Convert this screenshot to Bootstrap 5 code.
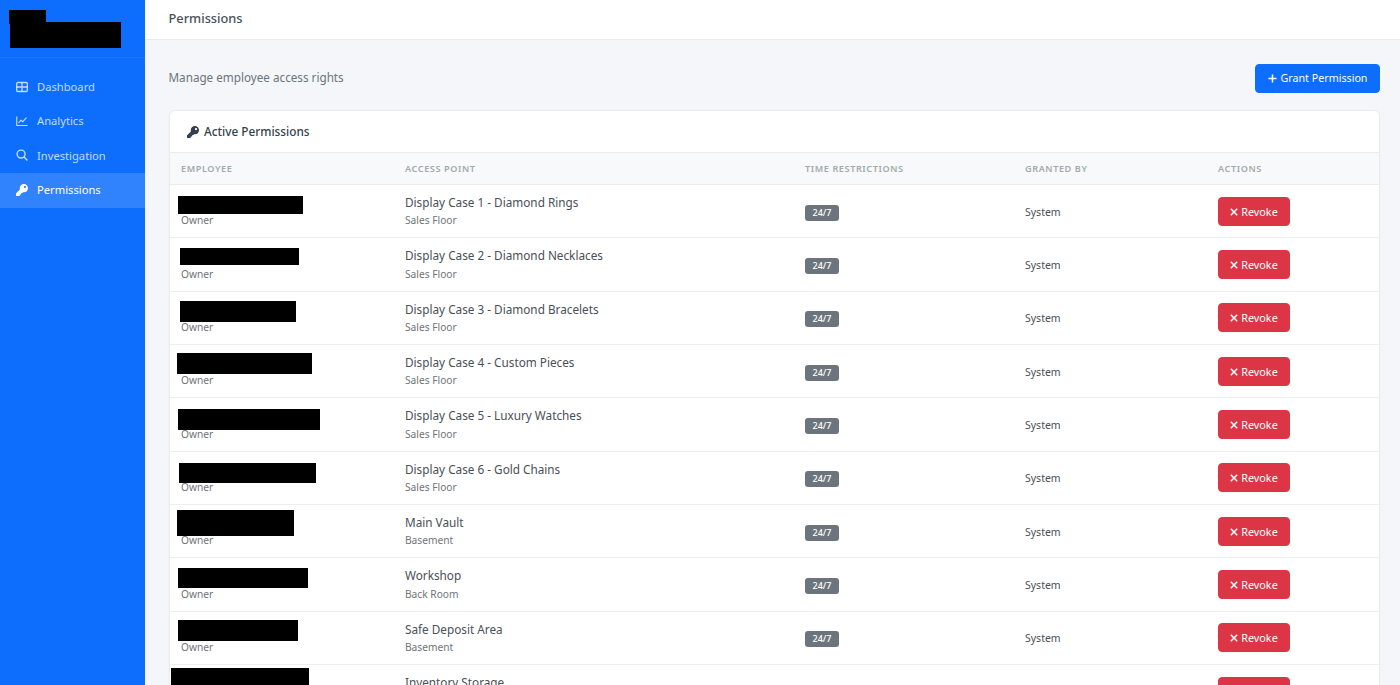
<!DOCTYPE html>
<html lang="en">
  <head>
    <meta charset="UTF-8" />
    <meta name="viewport" content="width=device-width, initial-scale=1.0" />
    <title>Permissions</title>
    <link href="https://cdn.jsdelivr.net/npm/bootstrap@5.3.0/dist/css/bootstrap.min.css" rel="stylesheet" />
    <style>
      html, body { height: 100%; overflow: hidden; }
      body { font-family: "Noto Sans", sans-serif; background: #f4f6f9; color: #495057; font-size: 11.2px; }
      .side-bar { width: 145px; background: #0d6efd; flex: none; }
      .side-logo { height: 58px; border-bottom: 1px solid rgba(255,255,255,.06); position: relative; }
      .side-links { padding-top: 12px; }
      .side-link { display: flex; align-items: center; height: 34.4px; padding-left: 16px; gap: 9px; color: rgba(255,255,255,.75); font-size: 11.2px; text-decoration: none; }
      .side-link svg { width: 12px; height: 12px; flex: none; margin-top: -1px; }
      .side-link.on { background: rgba(255,255,255,.15); color: #fff; }
      .top-bar { height: 40px; background: #fff; border-bottom: 1px solid #e9ecef; padding: 0 0 2px 23.5px; font-size: 12.8px; font-weight: 500; color: #495057; }
      .main-area { padding: 24px 20px 0 24px; }
      .page-note { font-size: 11.7px; color: #6c757d; margin: 0 0 2px -.5px; }
      .grant-btn { font-size: 10.7px; height: 29px; width: 125px; padding: 0; border-radius: 4px; }
      .perm-card { border: 1px solid #e9ecef; border-radius: 6px; background: #fff; margin-top: 17px; box-shadow: 0 1px 2px rgba(0,0,0,.03); }
      .perm-head { height: 41px; padding-left: 17px; font-size: 11.8px; font-weight: 500; color: #343f4c; gap: 5px; }
      .perm-table { table-layout: fixed; width: 100%; margin: 0; }
      .perm-table th { background: #f8f9fa; color: #a0abab; font-size: 9.1px; font-weight: 600; letter-spacing: .6px; text-transform: uppercase; height: 32px; padding: 0 11px; border-top: 1px solid #e9ecef; border-bottom: 1px solid #e9ecef; vertical-align: middle; }
      .perm-table td { height: 53.33px; padding: 0 11px; border-bottom: 1px solid #eceff1; vertical-align: middle; color: #495057; font-size: 10.5px; position: relative; }
      .perm-table td.low-cell { padding-top: 3px; }
      .name-line { font-size: 11.76px; line-height: 17px; height: 17px; }
      .sub-line { font-size: 10.2px; line-height: 15px; color: #6f7478; margin-top: 2.5px; }
      .time-tag { background: #6c757d; color: #fff; font-size: 9px; font-weight: 500; border-radius: 3px; display: block; width: 34px; height: 16px; line-height: 16px; text-align: center; }
      .revoke-btn { font-size: 10.8px; width: 72px; height: 29px; padding: 1px 0 0; border-radius: 4px; gap: 3px; }
      .black-box { position: absolute; background: #000; }
    </style>
  </head>
  <body>
    <div class="d-flex h-100">
      <div class="side-bar">
        <div class="side-logo">
          <div class="black-box" style="left:9px;top:10px;width:37px;height:14px"></div>
          <div class="black-box" style="left:10px;top:22px;width:111px;height:26px"></div>
        </div>
        <nav class="side-links">
          <a class="side-link" href="#">
            <svg viewBox="0 0 16 16" fill="none" stroke="currentColor" stroke-width="1.7"><rect x=".9" y="2" width="14.2" height="12" rx="1.5"/><path d="M.8 8h14.4M8 2v12"/></svg>Dashboard</a>
          <a class="side-link" href="#">
            <svg viewBox="0 0 16 16" fill="none" stroke="currentColor" stroke-width="1.5"><path d="M1 2v12h14.5"/><path d="M3.5 10.5 6.5 7l2.5 2 5-5.5"/></svg>Analytics</a>
          <a class="side-link" href="#">
            <svg viewBox="0 0 16 16" fill="none" stroke="currentColor" stroke-width="1.9"><circle cx="6.8" cy="6.8" r="5.3"/><path d="m10.8 10.8 4.4 4.4"/></svg>Investigation</a>
          <a class="side-link on" href="#">
            <svg viewBox="0 0 512 512" fill="currentColor"><path d="M512 176.001C512 273.203 433.202 352 336 352c-11.22 0-22.19-1.062-32.827-3.069l-24.012 27.014A23.999 23.999 0 0 1 261.223 384H224v40c0 13.255-10.745 24-24 24h-40v40c0 13.255-10.745 24-24 24H24c-13.255 0-24-10.745-24-24v-78.059c0-6.365 2.529-12.47 7.029-16.971l161.802-161.802C163.108 213.814 160 195.271 160 176 160 78.798 238.797.001 335.999 0 433.488-.001 512 78.511 512 176.001zM336 128c0 26.51 21.49 48 48 48s48-21.49 48-48-21.49-48-48-48-48 21.49-48 48z"/></svg>Permissions</a>
        </nav>
      </div>
      <div class="flex-grow-1 overflow-hidden">
        <div class="top-bar d-flex align-items-center">Permissions</div>
        <div class="main-area">
          <div class="d-flex justify-content-between align-items-center">
            <span class="page-note">Manage employee access rights</span>
            <button class="btn btn-primary grant-btn d-flex align-items-center justify-content-center gap-1" type="button">
              <svg width="9" height="9" viewBox="0 0 10 10" fill="none" stroke="currentColor" stroke-width="1.7"><path d="M5 .5v9M.5 5h9"/></svg>Grant Permission</button>
          </div>
          <div class="perm-card">
            <div class="perm-head d-flex align-items-center">
              <svg width="12" height="12" viewBox="0 0 512 512" fill="currentColor"><path d="M512 176.001C512 273.203 433.202 352 336 352c-11.22 0-22.19-1.062-32.827-3.069l-24.012 27.014A23.999 23.999 0 0 1 261.223 384H224v40c0 13.255-10.745 24-24 24h-40v40c0 13.255-10.745 24-24 24H24c-13.255 0-24-10.745-24-24v-78.059c0-6.365 2.529-12.47 7.029-16.971l161.802-161.802C163.108 213.814 160 195.271 160 176 160 78.798 238.797.001 335.999 0 433.488-.001 512 78.511 512 176.001zM336 128c0 26.51 21.49 48 48 48s48-21.49 48-48-21.49-48-48-48-48 21.49-48 48z"/></svg>
              Active Permissions
            </div>
            <table class="table perm-table">
              <colgroup>
                <col style="width:224px" /><col style="width:400px" /><col style="width:220px" /><col style="width:193px" /><col />
              </colgroup>
              <thead>
                <tr><th>Employee</th><th>Access Point</th><th>Time Restrictions</th><th>Granted By</th><th>Actions</th></tr>
              </thead>
              <tbody id="permRows"></tbody>
            </table>
          </div>
        </div>
      </div>
    </div>

    <script src="https://cdn.jsdelivr.net/npm/bootstrap@5.3.0/dist/js/bootstrap.bundle.min.js"></script>
    <script>
      // x, y (from top of row), w, h of the blacked out name
      const rows = [
        ["Display Case 1 - Diamond Rings", "Sales Floor", 8, 11, 125, 18],
        ["Display Case 2 - Diamond Necklaces", "Sales Floor", 10, 10, 119, 17],
        ["Display Case 3 - Diamond Bracelets", "Sales Floor", 10, 9, 116, 21],
        ["Display Case 4 - Custom Pieces", "Sales Floor", 7, 8, 135, 21],
        ["Display Case 5 - Luxury Watches", "Sales Floor", 8, 11, 142, 21],
        ["Display Case 6 - Gold Chains", "Sales Floor", 9, 11, 137, 20],
        ["Main Vault", "Basement", 7, 5, 117, 26],
        ["Workshop", "Back Room", 8, 10, 130, 20],
        ["Safe Deposit Area", "Basement", 8, 8, 120, 21],
        ["Inventory Storage", "Basement", 1, 3, 138, 26],
      ];
      document.getElementById("permRows").innerHTML = rows.map((r) => `
        <tr>
          <td>
            <div class="black-box" style="left:${r[2]}px;top:${r[3]}px;width:${r[4]}px;height:${r[5]}px"></div>
            <div class="name-line"></div>
            <div class="sub-line">Owner</div>
          </td>
          <td><div class="name-line">${r[0]}</div><div class="sub-line">${r[1]}</div></td>
          <td class="low-cell"><span class="time-tag">24/7</span></td>
          <td class="low-cell">System</td>
          <td>
            <button class="btn btn-danger revoke-btn d-flex align-items-center justify-content-center" type="button">
              <svg width="8" height="8" viewBox="0 0 8 8" fill="none" stroke="currentColor" stroke-width="1.5"><path d="m.8.8 6.4 6.4M7.2.8.8 7.2"/></svg>Revoke</button>
          </td>
        </tr>`).join("");
    </script>
  </body>
</html>
